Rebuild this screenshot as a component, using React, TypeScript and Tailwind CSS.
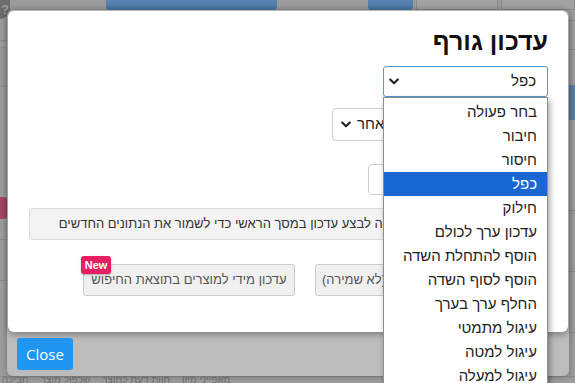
import React from 'react';

const options = [
  'בחר פעולה',
  'חיבור',
  'חיסור',
  'כפל',
  'חילוק',
  'עדכון ערך לכולם',
  'הוסף להתחלת השדה',
  'הוסף לסוף השדה',
  'החלף ערך בערך',
  'עיגול מתמטי',
  'עיגול למטה',
  'עיגול למעלה',
];

const Chevron = () => (
  <svg width="10" height="7" viewBox="0 0 10 7" className="shrink-0">
    <path d="M1.2 1.4 L5 5.2 L8.8 1.4" fill="none" stroke="#222" strokeWidth="2.1" strokeLinecap="round" strokeLinejoin="round" />
  </svg>
);

const BackgroundPage = () => (
  <div className="flex h-full flex-col">
    {/* top toolbar of the page under the overlay */}
    <div className="flex h-[10px] items-start">
      <div className="flex h-[19px] w-[10px] items-center justify-center rounded-br-full bg-[#6c6c6c] text-[13px] font-bold leading-none text-[#9b9b9b]">?</div>
      <div className="ml-[96px] h-[10px] w-[171px] rounded-b-[3px] bg-gradient-to-b from-[#5a86b3] to-[#4a77a3]" />
      <div className="ml-[91px] h-[10px] w-[45px] rounded-b-[3px] bg-gradient-to-b from-[#5a86b3] to-[#4a77a3]" />
      <div className="ml-[3px] h-[10px] w-[82px] border border-t-0 border-[#8a8a8a] bg-[#a2a2a2]" />
      <div className="ml-[3px] h-[10px] flex-1 border border-t-0 border-[#8a8a8a] bg-[#a2a2a2]" />
    </div>
    <div className="flex flex-1 justify-between">
      <div className="flex w-[7px] flex-col">
        <div className="mt-[30px] h-px bg-[#8a8a8a]" />
        <div className="mt-[6px] h-[40px] border-y border-[#8e8e8e] bg-[#999]" />
        <div className="mt-[110px] h-[22px] rounded-r-[3px] bg-[#a44466]" />
        <div className="mt-[20px] h-px bg-[#888]" />
        <div className="mt-[40px] h-px bg-[#888]" />
      </div>
      <div className="flex w-[6px] flex-col">
        <div className="mt-[10px] h-[30px] border-y border-[#8a8a8a]" />
        <div className="mt-[35px] h-[35px] bg-[#5d7fa3]" />
        <div className="mt-[90px] h-px bg-[#888]" />
        <div className="mt-[60px] h-px bg-[#888]" />
        <div className="mt-[60px] h-px bg-[#888]" />
      </div>
    </div>
    <div className="flex h-[7px] items-end gap-[12px] overflow-hidden border-t border-[#8a8a8a] px-[2px] text-[10px] leading-[7px] text-[#707070]">
      <span>חבילה</span>
      <span>שכפול מוצר</span>
      <span>חוות דעת למוצר</span>
      <span>מאפייני מיון</span>
    </div>
  </div>
);

const SelectWithList = () => (
  <div className="relative mt-[11px] h-[31px] w-[165px] self-start">
    <div className="flex h-full items-center justify-between rounded-[3px] border border-[#5b97cf] bg-white pl-[5px] pr-[11px] text-[15px] text-[#222]">
      <span>כפל</span>
      <Chevron />
    </div>
    {/* open native-style option list */}
    <ul className="absolute right-0 top-full z-20 w-[165px] border border-[#8f8f8f] bg-white py-[2px] text-[15px] text-[#222] shadow-[2px_3px_6px_rgba(0,0,0,0.35)]">
      {options.map((o) => (
        <li
          key={o}
          className={
            o === 'כפל'
              ? 'flex h-[24px] items-center bg-[#1967d2] pr-[10px] text-white'
              : 'flex h-[24px] items-center pr-[10px]'
          }
        >
          {o}
        </li>
      ))}
    </ul>
  </div>
);

export default function App() {
  return (
    <div className="relative h-[383px] w-[575px] overflow-hidden bg-[#9c9c9c] font-['Liberation_Sans',Arial,sans-serif]">
      <BackgroundPage />

      {/* modal */}
      <div className="absolute left-[7px] top-[10px] flex h-[366px] w-[562px] flex-col rounded-[6px] bg-[#bcbcbc] shadow-[0_0_6px_rgba(0,0,0,0.3)]">
        <div dir="rtl" className="mx-px mt-px flex h-[321px] flex-col rounded-[6px] bg-white pl-[21px] pr-[20px] pt-[17px] shadow-[0_3px_6px_rgba(0,0,0,0.3)]">
          <h2 className="h-[27px] text-[25px] font-bold leading-[27px] text-[#111]">עדכון גורף</h2>

          <SelectWithList />

          <div className="mt-[11px] flex h-[33px] w-[216px] items-center overflow-hidden whitespace-nowrap rounded-[4px] border border-[#cfcfcf] bg-white pl-[8px] text-[15px] text-[#222]">
            <span className="min-w-0 flex-1 overflow-hidden pl-[6px] text-left">שדה מחיר למוצר אחר</span>
            <Chevron />
          </div>

          <div className="mt-[23px] h-[31px] w-[180px] rounded-[4px] border border-[#cfcfcf] bg-white" />

          <div className="mt-[13px] flex h-[32px] items-center justify-center whitespace-nowrap rounded-[3px] border border-[#dcdcdc] bg-[#f3f3f3] text-[13px] text-[#333]">
            שימו לב: לאחר עדכון חובה לבצע עדכון במסך הראשי כדי לשמור את הנתונים החדשים
          </div>

          <div className="mt-[24px] flex justify-center gap-[20px]">
            <button className="h-[32px] w-[179px] whitespace-nowrap rounded-[3px] border border-[#cccccc] bg-[#f0f0f0] px-[6px] text-left text-[13px] text-[#555]">
              עדכון בעמוד (לא שמירה)
            </button>
            <button className="relative h-[32px] w-[212px] whitespace-nowrap rounded-[3px] border border-[#cccccc] bg-[#f0f0f0] text-[13px] text-[#555]">
              עדכון מידי למוצרים בתוצאת החיפוש
              <span className="absolute left-[-3px] top-[-9px] flex h-[18px] w-[30px] items-center justify-center rounded-[3px] bg-[#e61e62] text-[11px] font-bold text-white shadow-[0_1px_2px_rgba(0,0,0,0.3)]">
                New
              </span>
            </button>
          </div>
        </div>

        <div className="flex flex-1 items-center pl-[10px]">
          <button className="h-[32px] w-[56px] rounded-[3px] bg-[#2196f0] font-['Open_Sans',sans-serif] text-[15px] text-white">
            Close
          </button>
        </div>
      </div>
    </div>
  );
}
